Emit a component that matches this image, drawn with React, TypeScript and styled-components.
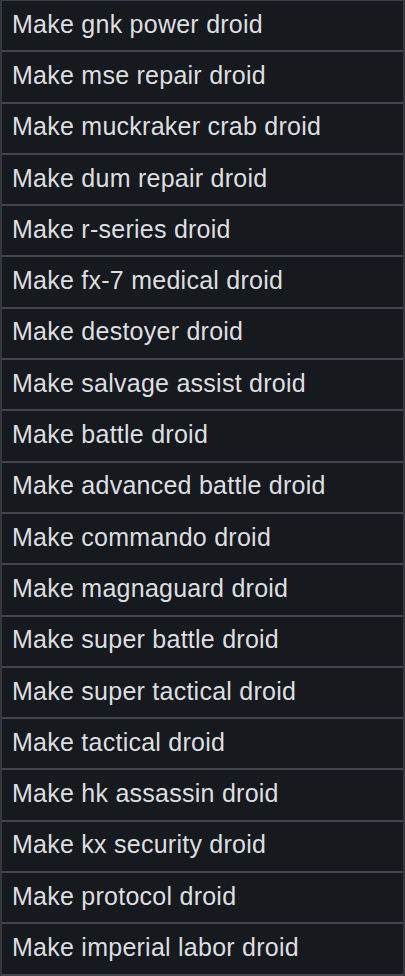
import styled, { createGlobalStyle } from "styled-components";

const droids = [
  "gnk power droid",
  "mse repair droid",
  "muckraker crab droid",
  "dum repair droid",
  "r-series droid",
  "fx-7 medical droid",
  "destoyer droid",
  "salvage assist droid",
  "battle droid",
  "advanced battle droid",
  "commando droid",
  "magnaguard droid",
  "super battle droid",
  "super tactical droid",
  "tactical droid",
  "hk assassin droid",
  "kx security droid",
  "protocol droid",
  "imperial labor droid",
];

const GlobalStyle = createGlobalStyle`
  html, body {
    margin: 0;
    padding: 0;
    background: #16191e;
  }
  * {
    box-sizing: border-box;
  }
`;

function App() {
  return (
    <>
      <GlobalStyle />
      <List>
        {droids.map((name) => (
          <Row key={name}>Make {name}</Row>
        ))}
      </List>
    </>
  );
}

const List = styled.ul`
  margin: 0;
  padding: 0;
  list-style: none;
  width: 405px;
  height: 976px;
  background-color: #16191e;
  border-top: 1px solid #3c3f45;
  border-left: 2px solid #34373c;
  border-right: 2px solid #34373c;
`;

const Row = styled.li`
  height: 51.3px;
  display: flex;
  align-items: center;
  padding: 0 0 3px 10px;
  border-bottom: 2px solid #43464c;
  font-family: "Liberation Sans", Arial, sans-serif;
  font-size: 25px;
  letter-spacing: 0.25px;
  color: #dedfe0;
  white-space: nowrap;
`;

export default App;
